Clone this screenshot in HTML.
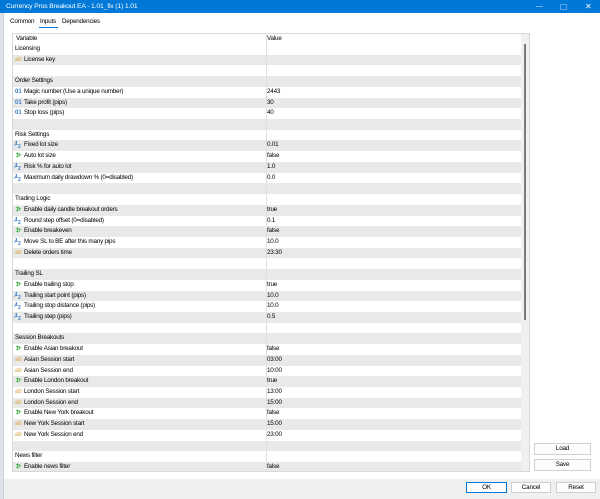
<!DOCTYPE html>
<html><head><meta charset="utf-8"><style>
*{margin:0;padding:0;box-sizing:border-box}
body{width:600px;height:499px;position:relative;overflow:hidden;background:#f0f0f0;font-family:"Liberation Sans",sans-serif;font-size:6.3px;letter-spacing:-0.2px;color:#000}
.abs{position:absolute}
#title{left:0;top:0;width:600px;height:13px;background:#0078d7;color:#fff;font-size:6.8px;letter-spacing:-0.15px;line-height:13px;padding-left:6px}
#panel{left:4px;top:13px;width:596px;height:466px;background:#fff}
#strip{left:0;top:13px;width:4px;height:486px;background:#dfe3e8;border-right:1px solid #c8d0da}
.tab{top:17px;line-height:10px}
#table{left:12px;top:33px;width:518px;height:439px;border:1px solid #d9d9d9;background:#fff;overflow:hidden}
.row{position:absolute;left:0;width:508px;height:10.72px;line-height:10.72px}
.g{background:#e9e9e9}
.c1{position:absolute;left:2px}
.c2{position:absolute;left:254px}
.ic{position:absolute;left:2px;font-size:6px;font-weight:bold;letter-spacing:0}
.txt{position:absolute;left:11px}
.vl{position:absolute;left:253px;top:0;width:1px;height:439px;background:#e0e0e0;z-index:2}
.btn{position:absolute;background:#fdfdfd;border:1px solid #d0d0d0;text-align:center}
</style></head><body>
<div id="title" class="abs">Currency Pros Breakout EA - 1.01_fix (1) 1.01
<span class="abs" style="left:536px;top:0">&#8212;</span>
<span class="abs" style="left:560px;top:4px;width:7px;height:6px;border:1px solid #5aa6e8"></span>
<span class="abs" style="left:585px;top:0;font-size:8px">&#10005;</span></div>
<div id="strip" class="abs"></div>
<div id="panel" class="abs"></div>
<div class="abs tab" style="left:10px">Common</div>
<div class="abs tab" style="left:40px">Inputs</div>
<div class="abs" style="left:39px;top:27px;width:19px;height:1px;background:#0078d7"></div>
<div class="abs tab" style="left:62px">Dependencies</div>
<div id="table" class="abs">
<div class="vl"></div>
<div class="row" style="top:0;height:10px;line-height:10px"><span class="c1" style="left:3px">Variable</span><span class="c2">Value</span></div>
<div id="rows"></div>
<div class="abs" style="left:508px;top:0;width:9px;height:439px;background:#f0f0f0;z-index:3"></div>
<div class="abs" style="left:511px;top:10px;width:2px;height:276px;background:#7a7a7a;z-index:4"></div>
</div>
<div class="btn" style="left:534px;top:443px;width:57px;height:12px;line-height:10px">Load</div>
<div class="btn" style="left:534px;top:459px;width:57px;height:12px;line-height:10px">Save</div>
<div class="btn" style="left:466px;top:482px;width:41px;height:11px;line-height:9px;border-color:#0078d7">OK</div>
<div class="btn" style="left:511px;top:482px;width:40px;height:11px;line-height:9px">Cancel</div>
<div class="btn" style="left:556px;top:482px;width:40px;height:11px;line-height:9px">Reset</div>
<script>
var R=[["h","Licensing"],["s","License key",""],["b"],["h","Order Settings"],["i","Magic number (Use a unique number)","2443"],["i","Take profit (pips)","30"],["i","Stop loss (pips)","40"],["b"],["h","Risk Settings"],["d","Fixed lot size","0.01"],["o","Auto lot size","false"],["d","Risk % for auto lot","1.0"],["d","Maximum daily drawdown % (0=disabled)","0.0"],["b"],["h","Trading Logic"],["o","Enable daily candle breakout orders","true"],["d","Round step offset (0=disabled)","0.1"],["o","Enable breakeven","false"],["d","Move SL to BE after this many pips","10.0"],["s","Delete orders time","23:30"],["b"],["h","Trailing SL"],["o","Enable trailing stop","true"],["d","Trailing start point (pips)","10.0"],["d","Trailing stop distance (pips)","10.0"],["d","Trailing step (pips)","0.5"],["b"],["h","Session Breakouts"],["o","Enable Asian breakout","false"],["s","Asian Session start","03:00"],["s","Asian Session end","10:00"],["o","Enable London breakout","true"],["s","London Session start","13:00"],["s","London Session end","15:00"],["o","Enable New York breakout","false"],["s","New York Session start","15:00"],["s","New York Session end","23:00"],["b"],["h","News filter"],["o","Enable news filter","false"]];
var IC={s:'<span class="ic" style="color:#d9a23a;font-weight:normal">ab</span>',i:'<span class="ic" style="color:#3a7cc4">01</span>',d:'<span class="ic" style="color:#3a7cc4">&#8260;</span><span class="ic" style="color:#3a7cc4;font-size:5px;top:-1px">1</span><span class="ic" style="color:#3a7cc4;font-size:5px;left:5px;top:2px">2</span>',o:'<span class="ic" style="color:#2fae3a">&#8613;</span><span class="ic" style="color:#2fae3a;left:5px;font-size:6px">+</span>'};
var h="";R.forEach(function(r,i){var top=10+i*10.72;var cls=i%2?"row g":"row";h+='<div class="'+cls+'" style="top:'+top+'px">';
if(r[0]=="h")h+='<span class="c1">'+r[1]+'</span>';else if(r[0]!="b"){h+=IC[r[0]]+'<span class="txt">'+r[1]+'</span><span class="c2">'+r[2]+'</span>';}
h+='</div>';});document.getElementById("rows").innerHTML=h;
</script>
</body></html>
